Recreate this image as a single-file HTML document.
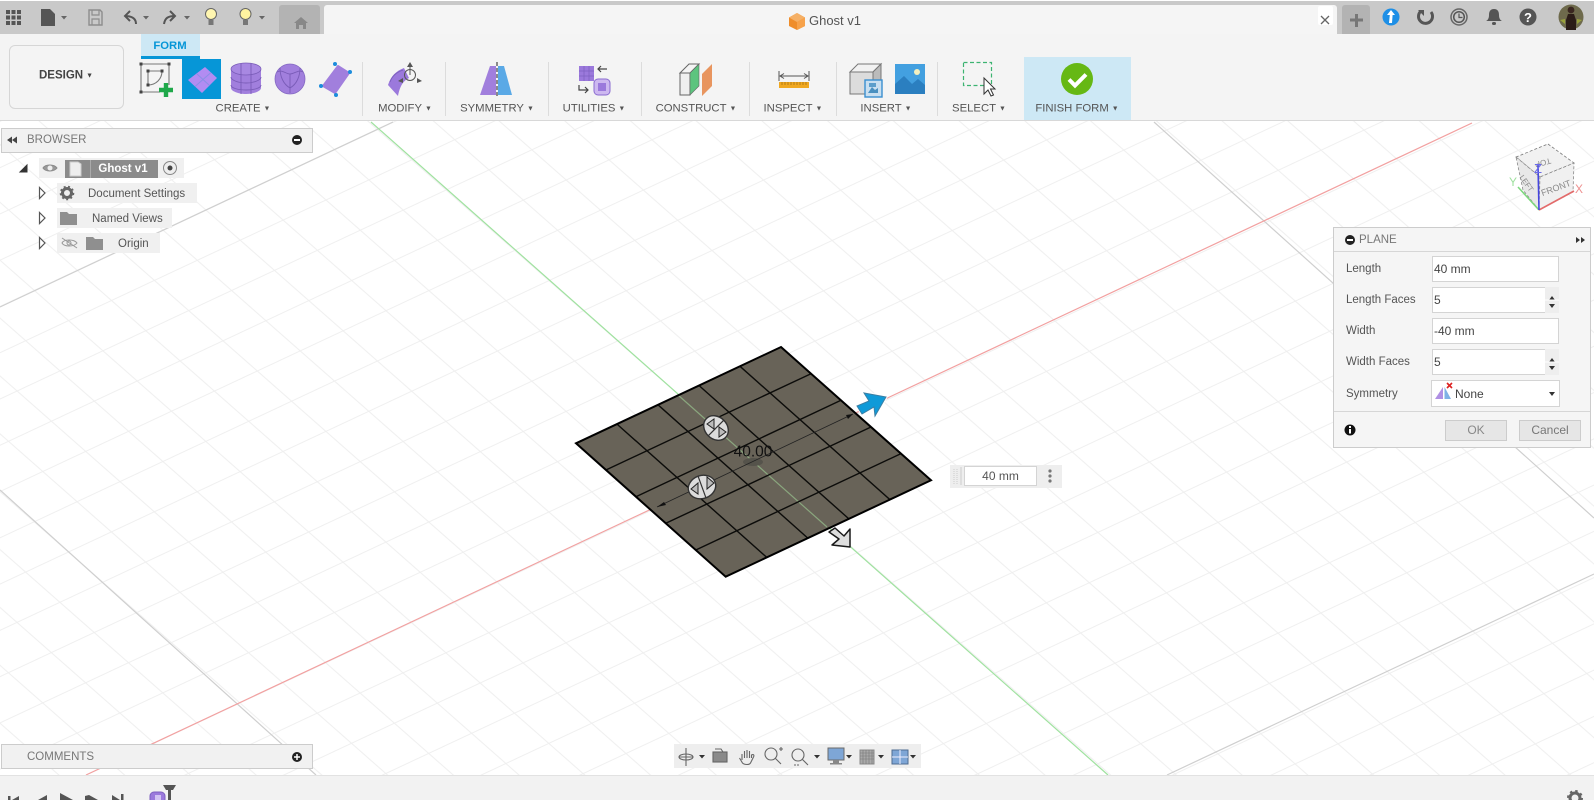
<!DOCTYPE html>
<html lang="en"><head><meta charset="utf-8"><title>Ghost v1</title>
<style>
html,body{margin:0;padding:0;width:1594px;height:800px;overflow:hidden;background:#fff;font-family:"Liberation Sans",Arial,sans-serif;color:#555;font-size:11.5px}
svg{position:absolute;left:0;top:0}
.b{position:absolute;box-sizing:border-box}
.t{position:absolute;white-space:nowrap;line-height:14px}
.c{position:absolute;white-space:nowrap;line-height:14px;transform:translate(-50%,-50%)}
.r{font-size:11.3px}
.c span{font-size:7px;vertical-align:1px;margin-left:3px}
.inp{position:absolute;box-sizing:border-box;background:#fff;border:1px solid #d4d4d4;font-size:12px;color:#444;line-height:24px;padding-left:1px}
.row{position:absolute;background:#f0f0f0;height:20px}
.btn{position:absolute;box-sizing:border-box;background:#e6e6e6;border:1px solid #ccc;text-align:center;line-height:18px;height:21px;font-size:12px}
</style></head><body>

<svg width="1594" height="800" viewBox="0 0 1594 800">
<defs>
<pattern id="g" patternUnits="userSpaceOnUse" width="100" height="100" patternTransform="matrix(.343 .302 .429 -.201 240 703)">
<rect x="-1.2" y="0" width="2.4" height="100" fill="#efefef"/><rect x="98.8" y="0" width="2.4" height="100" fill="#efefef"/>
<rect x="0" y="-1.2" width="100" height="2.4" fill="#efefef"/><rect x="0" y="98.8" width="100" height="2.4" fill="#efefef"/>
</pattern>
</defs>
<rect x="0" y="120" width="1594" height="660" fill="#fff"/>
<rect x="0" y="120" width="1594" height="660" fill="url(#g)"/>
<g stroke="#cfcfcf" stroke-width="1.2" fill="none">
<path d="M0 490L316 775"/><path d="M0 307L393 122"/><path d="M1154 122L1594 518"/><path d="M1594 574L1167 775"/>
</g>
<path d="M371 122L1108 775" stroke="#9fe29f" stroke-width="1.2"/>
<path d="M1472 123L86 775" stroke="#f2a0a0" stroke-width="1.2"/>

<!-- plane -->
<polygon points="781,347 931,480.3 725.7,576.7 576,443.3" fill="#686358"/>
<path d="M678 395L827 527" stroke="#8aa67e" stroke-width="1.2"/>
<ellipse cx="753" cy="462" rx="10" ry="4" fill="#55534b"/>
<g stroke="#0c0c0a" stroke-width="1.4" fill="none">
<path d="M740 366.3L889.9 499.6M699 385.5L848.9 518.9M658 404.8L807.8 538.1M617 424.1L766.8 557.4"/>
<path d="M811 373.7L605.9 470M841 400.3L635.9 496.7M871 427L665.8 523.3M901 453.6L695.8 550"/>
</g>
<polygon points="781,347 931,480.3 725.7,576.7 576,443.3" fill="none" stroke="#000" stroke-width="2"/>
<path d="M657 507L853 414" stroke="#222" stroke-width=".8"/>
<polygon points="657,507 664,502 666,505" fill="#111"/><polygon points="853,414 846,415 848,419" fill="#111"/>
<!-- manipulators -->
<g transform="rotate(45 716 428)"><ellipse cx="716" cy="428" rx="13.5" ry="11" fill="#dcdcdc" stroke="#333" stroke-width="1.4"/><path d="M716 417V439" stroke="#333" stroke-width="1.2"/></g>
<polygon points="707,424 714,419 714,429" fill="#bbb" stroke="#222"/><polygon points="726,432 719,427 719,437" fill="#bbb" stroke="#222"/>
<g transform="rotate(-20 702 487)"><ellipse cx="702" cy="487" rx="14" ry="11.5" fill="#dcdcdc" stroke="#333" stroke-width="1.4"/><path d="M702 475.500V498.500" stroke="#333" stroke-width="1.2"/></g>
<polygon points="691,489 698,483 698,494" fill="#bbb" stroke="#222"/><polygon points="714,483 707,477 707,489" fill="#bbb" stroke="#222"/>
<!-- arrows -->
<polygon points="886,397 864,393 869,401 857,406 862,414 874,407 875,416" fill="#0f9ad8" stroke="#fff" stroke-width="3" stroke-linejoin="round"/>
<polygon points="886,397 864,393 869,401 857,406 862,414 874,407 875,416" fill="#0f9ad8" stroke="#3a7fa5" stroke-width="1"/>
<polygon points="850,547 832,545 839,539 829,532 835,528 844,536 850,529" fill="#dedede" stroke="#1a1a1a" stroke-width="1.5" stroke-linejoin="round"/>
<!-- view cube -->
<polygon points="1548,144 1574,163 1540,177 1516,157" fill="#f1f1f1" stroke="#777" stroke-dasharray="3 2" stroke-width=".8"/>
<polygon points="1516,157 1540,177 1539,210 1523,190" fill="#e8e8e8" stroke="#888" stroke-dasharray="3 2" stroke-width=".8"/>
<polygon points="1540,177 1574,163 1573,192 1539,210" fill="#f0f0f0" stroke="#888" stroke-dasharray="3 2" stroke-width=".8"/>
<text x="1556" y="191" font-size="9" fill="#888" text-anchor="middle" transform="rotate(-20 1556 188)" font-family="Liberation Sans">FRONT</text>
<text x="1527" y="186" font-size="7.5" fill="#888" text-anchor="middle" transform="rotate(55 1527 183)" font-family="Liberation Sans">LEFT</text>
<text x="1543" y="166" font-size="8" fill="#888" text-anchor="middle" transform="rotate(165 1543 163)" font-family="Liberation Sans">TOP</text>
<path d="M1539 210L1574 191" stroke="#e36b6b" stroke-width="1.6"/>
<path d="M1539 210L1518 187" stroke="#7fd87f" stroke-width="1.6"/>
<path d="M1539 210L1538 165" stroke="#4646e0" stroke-width="1.6"/>
<text x="1538" y="173" font-size="13" fill="#6a6ae8" text-anchor="middle" font-family="Liberation Sans">Z</text>
<text x="1579" y="193" font-size="12" fill="#ee8f8f" text-anchor="middle" font-family="Liberation Sans">X</text>
<text x="1513" y="186" font-size="12" fill="#9fe09f" text-anchor="middle" font-family="Liberation Sans">Y</text>
</svg>

<!-- top bar -->
<div class="b" style="left:0;top:1px;width:1594px;height:33px;background:#c9c9c9"></div>
<div class="b" style="left:279px;top:5px;width:41px;height:29px;background:#b3b3b3;border-radius:3px 3px 0 0"></div>
<div class="b" style="left:324px;top:5px;width:1013px;height:29px;background:#f5f5f5;border-radius:3px 3px 0 0"></div>
<div class="b" style="left:1318px;top:6px;width:15px;height:19px;background:#fff;border-radius:2px"></div>
<div class="b" style="left:1342px;top:5px;width:28px;height:29px;background:#b3b3b3;border-radius:3px 3px 0 0"></div>
<div class="c" style="left:835px;top:21px;font-size:13px;color:#555">Ghost v1</div>

<!-- ribbon -->
<div class="b" style="left:0;top:34px;width:1594px;height:87px;background:#f4f4f4;border-bottom:1px solid #d8d8d8"></div>
<div class="b" style="left:9px;top:45px;width:115px;height:64px;border:1px solid #d6d6d6;border-radius:6px"></div>
<div class="c" style="left:66px;top:76px;font-weight:bold;color:#444">DESIGN<span>▼</span></div>
<div class="b" style="left:141px;top:34px;width:59px;height:25px;background:#cde8f5;border-bottom:3px solid #0696d7"></div>
<div class="c r" style="left:170px;top:46px;font-weight:bold;color:#0696d7">FORM</div>
<div class="b" style="left:182px;top:59px;width:39px;height:40px;background:#0696d7"></div>
<div class="b" style="left:1024px;top:57px;width:107px;height:63px;background:#cde8f5"></div>
<div class="b" style="left:362px;top:62px;width:1px;height:54px;background:#dcdcdc"></div>
<div class="b" style="left:445px;top:62px;width:1px;height:54px;background:#dcdcdc"></div>
<div class="b" style="left:548px;top:62px;width:1px;height:54px;background:#dcdcdc"></div>
<div class="b" style="left:641px;top:62px;width:1px;height:54px;background:#dcdcdc"></div>
<div class="b" style="left:749px;top:62px;width:1px;height:54px;background:#dcdcdc"></div>
<div class="b" style="left:836px;top:62px;width:1px;height:54px;background:#dcdcdc"></div>
<div class="b" style="left:937px;top:62px;width:1px;height:54px;background:#dcdcdc"></div>
<div class="c r" style="left:243px;top:109px">CREATE<span>▼</span></div>
<div class="c r" style="left:405px;top:109px">MODIFY<span>▼</span></div>
<div class="c r" style="left:497px;top:109px">SYMMETRY<span>▼</span></div>
<div class="c r" style="left:594px;top:109px">UTILITIES<span>▼</span></div>
<div class="c r" style="left:696px;top:109px">CONSTRUCT<span>▼</span></div>
<div class="c r" style="left:793px;top:109px">INSPECT<span>▼</span></div>
<div class="c r" style="left:886px;top:109px">INSERT<span>▼</span></div>
<div class="c r" style="left:979px;top:109px">SELECT<span>▼</span></div>
<div class="c r" style="left:1077px;top:109px">FINISH FORM<span>▼</span></div>

<!-- browser -->
<div class="b" style="left:1px;top:128px;width:312px;height:25px;background:#f1f1f1;border:1px solid #ccc"></div>
<div class="t" style="left:27px;top:133px;color:#777">BROWSER</div>
<div class="row" style="left:39px;top:158px;width:145px"></div>
<div class="b" style="left:65px;top:160px;width:93px;height:18px;background:#8b8b8b"></div>
<div class="c" style="left:123px;top:169px;color:#fff;font-weight:bold">Ghost v1</div>
<div class="row" style="left:57px;top:183px;width:140px"></div>
<div class="t" style="left:88px;top:187px">Document Settings</div>
<div class="row" style="left:57px;top:208px;width:115px"></div>
<div class="t" style="left:92px;top:212px">Named Views</div>
<div class="row" style="left:57px;top:233px;width:103px"></div>
<div class="t" style="left:118px;top:237px">Origin</div>

<!-- plane panel -->
<div class="b" style="left:1333px;top:227px;width:258px;height:221px;background:#f5f5f5;border:1px solid #ccc"></div>
<div class="b" style="left:1334px;top:251px;width:256px;height:1px;background:#d6d6d6"></div>
<div class="b" style="left:1334px;top:411px;width:256px;height:1px;background:#d6d6d6"></div>
<div class="t" style="left:1359px;top:233px;color:#777">PLANE</div>
<div class="t" style="left:1346px;top:262px">Length</div>
<div class="t" style="left:1346px;top:293px">Length Faces</div>
<div class="t" style="left:1346px;top:324px">Width</div>
<div class="t" style="left:1346px;top:355px">Width Faces</div>
<div class="t" style="left:1346px;top:387px">Symmetry</div>
<div class="inp" style="left:1432px;top:256px;width:127px;height:26px">40 mm</div>
<div class="inp" style="left:1432px;top:287px;width:127px;height:26px">5</div>
<div class="inp" style="left:1432px;top:318px;width:127px;height:26px">-40 mm</div>
<div class="inp" style="left:1432px;top:349px;width:127px;height:26px">5</div>
<div class="inp" style="left:1431px;top:380px;width:129px;height:27px;padding-left:23px;line-height:26px">None</div>
<div class="b" style="left:1545px;top:287px;width:14px;height:26px;background:#eee"></div>
<div class="b" style="left:1545px;top:349px;width:14px;height:26px;background:#eee"></div>
<div class="btn" style="left:1445px;top:420px;width:62px;color:#888">OK</div>
<div class="btn" style="left:1519px;top:420px;width:62px;color:#777">Cancel</div>

<!-- dimension box -->
<div class="b" style="left:950px;top:465px;width:112px;height:23px;background:#eee"></div>
<div class="inp" style="left:964px;top:466px;width:73px;height:20px;text-align:center;line-height:19px;color:#555;padding:0">40 mm</div>

<!-- comments, timeline, nav -->
<div class="b" style="left:1px;top:744px;width:312px;height:25px;background:#f1f1f1;border:1px solid #ccc"></div>
<div class="t" style="left:27px;top:750px;color:#777">COMMENTS</div>
<div class="b" style="left:0;top:775px;width:1594px;height:25px;background:#f2f2f2;border-top:1px solid #e2e2e2"></div>
<div class="b" style="left:674px;top:744px;width:247px;height:24px;background:#eee"></div>

<!-- icon overlay -->
<svg width="1594" height="800" viewBox="0 0 1594 800">
<!-- grid -->
<g fill="#555"><rect x="6" y="10" width="4" height="4"/><rect x="11.5" y="10" width="4" height="4"/><rect x="17" y="10" width="4" height="4"/><rect x="6" y="15.5" width="4" height="4"/><rect x="11.5" y="15.5" width="4" height="4"/><rect x="17" y="15.5" width="4" height="4"/><rect x="6" y="21" width="4" height="4"/><rect x="11.5" y="21" width="4" height="4"/><rect x="17" y="21" width="4" height="4"/></g>
<path d="M41 9h9l5 5v12H41z" fill="#555"/>
<g fill="#666"><path d="M61 16h6l-3 3.5zM143 16h6l-3 3.5zM184 16h6l-3 3.5zM259 16h6l-3 3.5z"/></g>
<path d="M89 10h11l2 2v13H89z" fill="#c9c9c9" stroke="#8d8d8d" stroke-width="1.4"/><path d="M92 10v5h7v-5M92 25v-6h7v6" fill="none" stroke="#8d8d8d" stroke-width="1.2"/>
<path d="M136 24c0-5-3-8-11-8M130 11l-5 5 5 5" fill="none" stroke="#555" stroke-width="2"/>
<path d="M164 24c1-6 4-8 11-8M170 11l5 5-5 5" fill="none" stroke="#555" stroke-width="2"/>
<circle cx="211" cy="14" r="5.5" fill="#fff6b0" stroke="#666"/><rect x="208.5" y="20" width="5" height="5" fill="#777"/>
<circle cx="245.5" cy="14" r="5.5" fill="#fff3a0" stroke="#666"/><rect x="243" y="20" width="5" height="5" fill="#777"/>
<path d="M294 23l7-6 7 6h-2v6h-3v-4h-4v4h-3v-6z" fill="#888"/>
<polygon points="797,13 805,17.5 805,26 797,30 789,26 789,17.5" fill="#ef8d2a"/><polygon points="797,22 805,17.5 805,26 797,30" fill="#f7a24a"/><polygon points="797,13 805,17.5 797,22 789,17.5" fill="#f5b066"/>
<path d="M1321 16l8 8M1329 16l-8 8" stroke="#666" stroke-width="1.3"/>
<path d="M1350 20h13M1356.5 14v13" stroke="#777" stroke-width="3"/>
<circle cx="1391" cy="17" r="8.5" fill="#1e8fe6"/><path d="M1391 10l4 5h-2.4l-.6 8h-3l.8-8H1387z" fill="#fff"/>
<path d="M1431 12a7 7 0 1 1-10-1" fill="none" stroke="#555" stroke-width="3"/><path d="M1418 10h6v6z" fill="#555"/>
<circle cx="1459" cy="17" r="8" fill="none" stroke="#666" stroke-width="1.5"/><circle cx="1459" cy="17" r="5.3" fill="none" stroke="#555" stroke-width="1.5"/><path d="M1459 13.5V17.5h3.5" fill="none" stroke="#555" stroke-width="1.2"/>
<path d="M1494 9c-4 0-5 3-5 6s-1 5-3 6h16c-2-1-3-3-3-6s-1-6-5-6z" fill="#555"/><rect x="1492" y="22" width="4" height="3" rx="1.5" fill="#555"/>
<circle cx="1528" cy="17" r="8.5" fill="#555"/><text x="1528" y="22" font-size="13" font-weight="bold" fill="#fff" text-anchor="middle" font-family="Liberation Sans">?</text>
<circle cx="1571" cy="17" r="12.5" fill="#6e6a4c"/><path d="M1566 30v-10l2-6h6l2 6v10z" fill="#2c1d18"/><circle cx="1571" cy="10" r="3.4" fill="#3a2620"/><path d="M1560 20l5-1v5zM1582 20l-5-1v5z" fill="#9aa23c"/>

<!-- sketch create -->
<g fill="none" stroke="#777" stroke-width="1.1"><path d="M141 64H169V85M141 64V92H160"/><path d="M148 71V85M162 71C162 79 156 85 148 85M148 71H162"/></g>
<g fill="#444"><rect x="139.5" y="62.5" width="3" height="3"/><rect x="167.5" y="62.5" width="3" height="3"/><rect x="139.5" y="90.5" width="3" height="3"/><rect x="146.5" y="69.5" width="3" height="3"/><rect x="160.5" y="69.5" width="3" height="3"/><rect x="146.5" y="83.5" width="3" height="3"/></g>
<path d="M166 83v14M159 90h14" stroke="#1fa84a" stroke-width="4.4"/>
<!-- plane icon -->
<polygon points="205,67 217,78 202,93 188,80" fill="#b28cf2"/><path d="M196.5 73.5L209.5 85.5M211 72.5L195 86.5" stroke="#8a8fe6" stroke-width="1"/>
<!-- box icon -->
<path d="M231 69v19c0 3 7 6 15 6s15-3 15-6V69z" fill="#a17fdd"/><ellipse cx="246" cy="69" rx="15" ry="6" fill="#a888e2" stroke="#7a5cb8" stroke-width=".8"/>
<g fill="none" stroke="#7a5cb8" stroke-width=".9"><path d="M231 77c0 3 7 6 15 6s15-3 15-6M231 85c0 3 7 5 15 5s15-2 15-5"/><path d="M241 74v20M251 74v20M241 63.500v11M251 63.500v11"/></g>
<!-- sphere -->
<circle cx="290" cy="79" r="15" fill="#a17fdd" stroke="#8368c2" stroke-width=".8"/>
<g fill="none" stroke="#7a5cb8" stroke-width=".9"><path d="M277 72c5-3 9 2 13 2s9-5 13-2M290 74v19M280 68c0 8 3 16 10 20M300 68c0 8-3 16-10 20"/></g>
<!-- quadball -->
<path d="M338 66l11 7-14 20-12-7z" fill="#a17fdd" stroke="#a17fdd" stroke-width="2" stroke-linejoin="round"/>
<g fill="#1c8cdc"><circle cx="335" cy="64" r="2"/><circle cx="350" cy="72" r="2"/><circle cx="336" cy="95" r="2"/><circle cx="321" cy="86" r="2"/></g>
<!-- modify -->
<path d="M388 85C391 76 396 71 404 68L409 78C403 81 400 86 398 96Z" fill="#9b79dc"/><path d="M390 82C392 76 397 72 403 70" fill="none" stroke="#7e60c0"/>
<circle cx="410" cy="75" r="5.5" fill="none" stroke="#555"/><path d="M410 62l3 5h-6zM403 78l-5 3 5 2zM417 78l5 3-5 2z" fill="#555"/><path d="M410 66V75" stroke="#555"/>
<!-- symmetry -->
<polygon points="490,66 496,66 496,95 480,95" fill="#a17fdd"/><polygon points="498,66 504,66 512,95 498,95" fill="#5aa9e6"/><path d="M497 62V97" stroke="#444" stroke-dasharray="4 2" stroke-width="1.2"/>
<!-- utilities -->
<rect x="579" y="66" width="15" height="15" fill="#9b79dc"/><path d="M579 71h15M579 76h15M584 66v15M589 66v15" stroke="#7e60c0" stroke-width=".7"/>
<path d="M598 69h9M601 66l-3 3 3 3" fill="none" stroke="#444" stroke-width="1.2"/>
<path d="M579 85v5h9M585 87l3 3-3 3" fill="none" stroke="#444" stroke-width="1.2"/>
<rect x="594" y="79" width="16" height="16" rx="4" fill="#cdb8f0" stroke="#8a6bd0"/><rect x="598" y="83" width="8" height="8" fill="#9b79dc"/>
<!-- construct -->
<polygon points="680,73 689,64 699,64 690,73" fill="#f4f4f4" stroke="#666" stroke-width="1"/>
<polygon points="680,73 690,73 690,95 680,95" fill="#efefef" stroke="#666" stroke-width="1"/>
<polygon points="690,73 699,64 699,86 690,95" fill="#5cc47e" stroke="#666" stroke-width=".6"/>
<polygon points="702,74 712,64 712,86 702,96" fill="#e8955f"/>
<!-- inspect -->
<path d="M779 71V81M809 71V81M780 76H808M784 73.500l-4 2.500 4 2.500M804 73.500l4 2.500-4 2.500" fill="none" stroke="#555"/>
<rect x="779" y="82" width="30" height="6" fill="#f0a820"/><path d="M782 82v3M785 82v3M788 82v3M791 82v3M794 82v3M797 82v3M800 82v3M803 82v3M806 82v3" stroke="#9a6b10" stroke-width=".7"/>
<!-- insert -->
<polygon points="850,72 858,64 881,64 873,72" fill="#f2f2f2" stroke="#777"/><polygon points="850,72 873,72 873,94 850,94" fill="#dcdcdc" stroke="#777"/><polygon points="873,72 881,64 881,80 873,84" fill="#bbb" stroke="#777"/>
<rect x="865" y="80" width="17" height="17" fill="#c9dff0" stroke="#3a8fd0" stroke-width="1.4"/><path d="M868 93l4-6 3 3 3-2v5z" fill="#4a90c0"/><rect x="869" y="83" width="7" height="4" fill="#5d9ecb"/>
<rect x="895" y="64" width="30" height="30" fill="#43a0e0"/><path d="M895 94V84l9-8 8 8 6-5 7 6v9z" fill="#2b7fc0"/><circle cx="917" cy="72" r="3" fill="#f3f0c0"/>
<!-- select -->
<rect x="963.500" y="62.500" width="28" height="23" fill="none" stroke="#3cb371" stroke-width="1.2" stroke-dasharray="4 2.500"/>
<polygon points="984,78 984,94 988,90 991,96 993.500,95 990.500,89 995,89" fill="#fff" stroke="#333"/>
<!-- finish -->
<circle cx="1077" cy="79" r="16" fill="#66b814"/><path d="M1069 79.500l6 6 11-11" fill="none" stroke="#fff" stroke-width="4"/>
<!-- browser icons -->
<path d="M7 140l5-3.500v7zM12 140l5-3.500v7z" fill="#444"/><circle cx="297" cy="140" r="5" fill="#222"/><rect x="294" y="139" width="6" height="2" fill="#fff"/>
<path d="M20 172l7-7v7z" fill="#333" stroke="#333"/>
<path d="M43 168c2.500-4 11-4 14 0-3 4-11.500 4-14 0z" fill="#999" stroke="#8a8a8a"/><circle cx="50" cy="168" r="2.500" fill="#eee"/>
<path d="M70 162h8l3 2v12H70z" fill="#eee" stroke="#ccc"/><rect x="90" y="160" width="1" height="18" fill="#aaa"/>
<circle cx="170" cy="168" r="6.500" fill="#eee" stroke="#888"/><circle cx="170" cy="168" r="2.500" fill="#444"/>
<g fill="#fff" stroke="#555" stroke-width="1.2"><path d="M39.500 187.500L45 193l-5.500 5.500z"/><path d="M39.500 212.500L45 218l-5.500 5.500z"/><path d="M39.500 237.500L45 243l-5.500 5.500z"/></g>
<circle cx="67" cy="193" r="4.500" fill="none" stroke="#666" stroke-width="3"/><circle cx="67" cy="193" r="6.500" fill="none" stroke="#666" stroke-width="1.600" stroke-dasharray="2 2.500"/>
<path d="M60 212h7l2 2h8v11H60z" fill="#8f8f8f"/>
<path d="M62 243c2-4 12-4 15 0-3 4-13 4-15 0z" fill="none" stroke="#999"/><circle cx="69" cy="243" r="2" fill="none" stroke="#999"/><path d="M62 238l15 10" stroke="#999"/>
<path d="M86 237h7l2 2h8v11H86z" fill="#8f8f8f"/>
<!-- plane panel icons -->
<circle cx="1350" cy="240" r="5" fill="#222"/><rect x="1347" y="239" width="6" height="2" fill="#fff"/>
<path d="M1576 237l4 3-4 3zM1581 237l4 3-4 3z" fill="#333"/>
<path d="M1552 296l-3 4h6zM1549 304h6l-3 4z" fill="#333"/><path d="M1552 358l-3 4h6zM1549 366h6l-3 4z" fill="#333"/>
<rect x="1545" y="299.500" width="14" height="1" fill="#fff"/><rect x="1545" y="361.500" width="14" height="1" fill="#fff"/>
<polygon points="1443,387 1443,399 1435,399" fill="#b090e4"/><polygon points="1444.500,387 1444.500,399 1451,399" fill="#7fb2e6"/><path d="M1447 383l5 5M1452 383l-5 5" stroke="#d22" stroke-width="1.6"/>
<path d="M1549 392h6l-3 4z" fill="#333"/>
<circle cx="1350" cy="430" r="5.500" fill="#111"/><rect x="1349" y="429" width="2" height="4.500" fill="#fff"/><rect x="1349" y="426" width="2" height="2" fill="#fff"/>
<!-- dim -->
<path d="M954 469v15M957 469v15" stroke="#ddd" stroke-dasharray="1 1" stroke-width="2"/><path d="M961 467v18" stroke="#ccc"/>
<g fill="#777"><circle cx="1050" cy="471" r="1.600"/><circle cx="1050" cy="476" r="1.600"/><circle cx="1050" cy="481" r="1.600"/></g>
<text x="753" y="456.500" font-size="15.500" fill="#111" text-anchor="middle" font-family="Liberation Sans">40.00</text>
<!-- comments -->
<circle cx="297" cy="757" r="5" fill="#222"/><path d="M294 757h6M297 754v6" stroke="#fff" stroke-width="1.5"/>
<!-- transport -->
<g fill="#555"><path d="M8 796h2.500v4H8zM19 796v4h-7zM47 795v5h-9zM60 793l13 7H60zM85 796v4h13l-9-5zM112 795l8 5h-8zM121 794h2.500v6H121z"/></g>
<rect x="150" y="792" width="15" height="12" rx="4" fill="#9b79dc" stroke="#7e60c0"/><rect x="155" y="795" width="6" height="5" fill="#d3c3f3"/>
<path d="M163 785h13l-3 5h-2v10h-3v-10h-2z" fill="#555"/>
<circle cx="1575" cy="798" r="5" fill="none" stroke="#666" stroke-width="3"/><circle cx="1575" cy="798" r="7" fill="none" stroke="#666" stroke-width="2" stroke-dasharray="2.500 3"/>
<!-- nav bar -->
<g fill="none" stroke="#666" stroke-width="1.1">
<path d="M686 748V766M679 757H693"/><ellipse cx="686" cy="757" rx="7" ry="3"/>
<rect x="713" y="752" width="14" height="10" fill="#8a8a8a"/><path d="M715 749h6l2 3"/>
<path d="M742 760v-6m2.500 4v-7m2.500 7v-8m2.500 8v-7m2 7v-3c2-1 3 0 2 2l-3 6c-1 2-6 2-8 0l-3-5"/>
<circle cx="771" cy="754" r="6"/><path d="M775 758l6 6M779 749h4M781 747v4"/>
<circle cx="798" cy="755" r="6"/><path d="M802 759l6 6"/><path d="M794 765h5" stroke-dasharray="2 1"/>
</g>
<rect x="828" y="748" width="16" height="12" fill="#7ea6d6" stroke="#6a6a6a"/><rect x="833" y="760" width="6" height="3" fill="#888"/><rect x="830" y="763" width="12" height="1.500" fill="#888"/>
<rect x="860" y="750" width="14" height="14" fill="#aaa" stroke="#888"/><path d="M863 750v14M866 750v14M869 750v14M872 750v14M860 753h14M860 756h14M860 759h14" stroke="#777" stroke-width=".6"/>
<rect x="892" y="750" width="16" height="14" fill="#7ea6d6" stroke="#4f6c91"/><path d="M900 750v14M892 757h16" stroke="#eef" stroke-width="1"/>
<g fill="#333"><path d="M699 755h6l-3 3.500zM814 755h6l-3 3.500zM846 755h6l-3 3.500zM878 755h6l-3 3.500zM910 755h6l-3 3.500z"/></g>
</svg>
</body></html>
